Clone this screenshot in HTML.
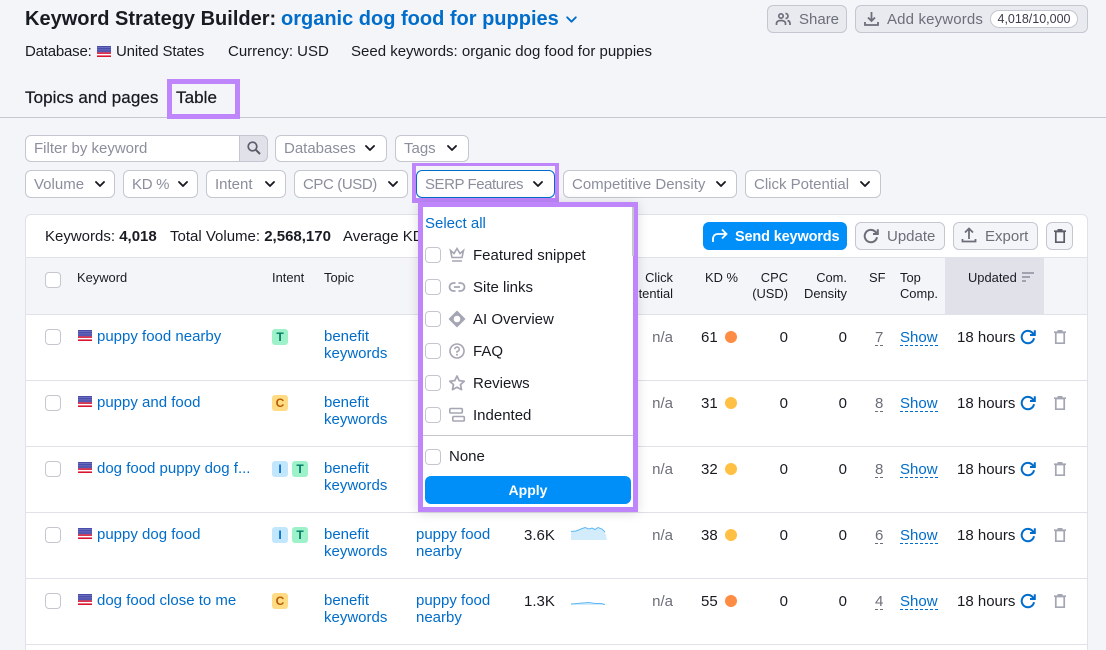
<!DOCTYPE html>
<html style="width:1106px;height:650px;overflow:hidden"><head><meta charset="utf-8">
<style>
html,body{margin:0;padding:0}
body{width:1106px;height:650px;overflow:hidden;background:#f4f5f9;position:relative;font-family:"Liberation Sans",sans-serif;font-size:15px;color:#191b23;letter-spacing:0}
.a,.t,.r{position:absolute}
.t,.r{white-space:nowrap;line-height:20px;margin-top:1px}
.r{text-align:right}
.b{color:#006dca}
.g{color:#8b8e9c}
.s{color:#6c6e79}
.h{font-size:12.9px}
.box{position:absolute;box-sizing:border-box;background:#fff;border:1px solid #c4c7cf;border-radius:6px}
.btn{position:absolute;box-sizing:border-box;background:#e9eaf0;border:1px solid #c4c7cf;border-radius:6px}
.cb{position:absolute;box-sizing:border-box;width:16px;height:16px;background:#fff;border:1px solid #c4c7cf;border-radius:4px}
.ln{position:absolute;height:1px;background:#e0e1e9}
.bd{position:absolute;width:16px;height:16px;border-radius:3px;text-align:center;font-weight:bold;font-size:12px;line-height:16px;letter-spacing:0}
.T{background:#9ef2c9;color:#007c65}
.C{background:#ffdb83;color:#b75d05}
.I{background:#c2e7fc;color:#006dca}
.d{position:absolute;width:12px;height:12px;border-radius:50%}
.dash{border-bottom:1px dashed currentColor;line-height:17px;height:16px}
.m{-webkit-text-stroke:.25px currentColor}
svg{position:absolute;overflow:visible}
</style></head><body>
<svg width="0" height="0" style="position:absolute">
<symbol id="flag" viewBox="0 0 14 11"><rect width="14" height="11" fill="#fff"/><rect y="0" width="14" height="1.570" fill="#d9142e"/><rect y="3.140" width="14" height="1.570" fill="#d9142e"/><rect y="6.280" width="14" height="1.570" fill="#d9142e"/><rect y="9.420" width="14" height="1.580" fill="#d9142e"/><rect width="14" height="6.200" fill="#3438a0"/><path d="M.5 1.200h13M.5 3.100h13M.5 5h13" stroke="#dfe2fa" stroke-width=".8" stroke-dasharray="1 1"/></symbol>
<symbol id="chev" viewBox="0 0 12 8"><path d="M2 2l4 4 4-4" fill="none" stroke="#191b23" stroke-width="1.900" stroke-linecap="round" stroke-linejoin="round"/></symbol>
<symbol id="ref" viewBox="0 0 16 16"><path d="M14 9.200A6.200 6.200 0 1 1 12.200 3.600L14.600 6M14.800 1.200V6H10" fill="none" stroke="currentColor" stroke-width="2"/></symbol>
<symbol id="tr" viewBox="0 0 12 14"><path d="M1.800 2.500h8.400v10.700H1.800zM0 2.200h12M3.500 .8h5" fill="none" stroke="currentColor" stroke-width="1.700"/></symbol>
</svg>

<!-- Header -->
<div class="t" style="left:25px;top:7px;font-size:20px;font-weight:bold;line-height:22px">Keyword Strategy Builder:</div>
<div class="t b" style="left:281px;top:7px;font-size:20px;font-weight:bold;line-height:22px">organic dog food for puppies</div>
<svg style="left:565px;top:15px" width="13" height="9" viewBox="0 0 12 8"><path d="M2 2l4 4 4-4" fill="none" stroke="#006dca" stroke-width="1.700" stroke-linecap="round" stroke-linejoin="round"/></svg>

<div class="t" style="left:25px;top:41px;letter-spacing:-.2px">Database:</div>
<svg style="left:97px;top:46px" width="14" height="11"><use href="#flag"/></svg>
<div class="t" style="left:116px;top:41px;letter-spacing:-.15px">United States</div>
<div class="t" style="left:228px;top:41px">Currency: USD</div>
<div class="t" style="left:351px;top:41px">Seed keywords: organic dog food for puppies</div>

<div class="btn" style="left:767px;top:5px;width:80px;height:28px"></div>
<svg style="left:775px;top:11px;color:#6c6e79" width="16" height="16" viewBox="0 0 16 16"><g fill="none" stroke="currentColor" stroke-width="1.700"><circle cx="6" cy="5" r="2.200"/><path d="M1.500 14v-1.500c0-2 2-3 4.500-3s4.500 1 4.500 3V14M10.500 2.500a2.400 2.400 0 0 1 0 5M12.500 9.500c1.500.4 2.500 1.400 2.500 3V14"/></g></svg>
<div class="t s" style="left:799px;top:9px">Share</div>
<div class="btn" style="left:855px;top:5px;width:233px;height:28px"></div>
<svg style="left:864px;top:11px" width="15" height="16" viewBox="0 0 15 16"><path d="M7.500 1v8.500M4 6.500l3.500 3.500 3.500-3.500M1 11v3h13v-3" fill="none" stroke="#6c6e79" stroke-width="1.800"/></svg>
<div class="t s" style="left:887px;top:9px;letter-spacing:.15px">Add keywords</div>
<div class="a" style="left:990px;top:10px;width:88px;height:18px;box-sizing:border-box;background:#fff;border:1px solid #c4c7cf;border-radius:9px;text-align:center;font-size:12.500px;line-height:16px;color:#3b3d47">4,018/10,000</div>

<!-- Tabs -->
<div class="t m" style="left:25px;top:87px;font-size:17px;letter-spacing:.07px">Topics and pages</div>
<div class="t m" style="left:176px;top:87px;font-size:17px;letter-spacing:.07px">Table</div>
<div class="ln" style="left:0;top:117px;width:1106px;background:#c4c7cf"></div>
<div class="a" style="left:167px;top:79px;width:73px;height:40px;box-sizing:border-box;border:5px solid #bf86fb"></div>

<!-- Filters -->
<div class="box" style="left:25px;top:135px;width:243px;height:27px"></div>
<div class="a" style="left:239px;top:135px;width:29px;height:27px;box-sizing:border-box;background:#e0e1e9;border:1px solid #c4c7cf;border-radius:0 6px 6px 0"></div>
<svg style="left:246px;top:140px" width="16" height="16" viewBox="0 0 16 16"><circle cx="6.500" cy="6.500" r="4.300" fill="none" stroke="#5a5d69" stroke-width="1.700"/><path d="M10 10l4 4" stroke="#5a5d69" stroke-width="2"/></svg>
<div class="t g" style="left:34px;top:138px">Filter by keyword</div>

<div class="box" style="left:275px;top:135px;width:112px;height:27px"></div>
<div class="t g" style="left:284px;top:138px">Databases</div>
<svg style="left:364px;top:144px" width="12" height="8"><use href="#chev"/></svg>
<div class="box" style="left:395px;top:135px;width:74px;height:27px"></div>
<div class="t g" style="left:404px;top:138px">Tags</div>
<svg style="left:446px;top:144px" width="12" height="8"><use href="#chev"/></svg>

<div class="box" style="left:25px;top:170px;width:90px;height:28px"></div>
<div class="t g" style="left:34px;top:174px">Volume</div>
<svg style="left:94px;top:180px" width="12" height="8"><use href="#chev"/></svg>
<div class="box" style="left:123px;top:170px;width:75px;height:28px"></div>
<div class="t g" style="left:132px;top:174px;letter-spacing:-.3px">KD %</div>
<svg style="left:177px;top:180px" width="12" height="8"><use href="#chev"/></svg>
<div class="box" style="left:206px;top:170px;width:80px;height:28px"></div>
<div class="t g" style="left:215px;top:174px">Intent</div>
<svg style="left:264px;top:180px" width="12" height="8"><use href="#chev"/></svg>
<div class="box" style="left:294px;top:170px;width:114px;height:28px"></div>
<div class="t g" style="left:303px;top:174px;letter-spacing:-.4px">CPC (USD)</div>
<svg style="left:387px;top:180px" width="12" height="8"><use href="#chev"/></svg>
<div class="box" style="left:416px;top:170px;width:139px;height:28px;border-color:#006dca"></div>
<div class="t g" style="left:425px;top:174px;letter-spacing:-.45px">SERP Features</div>
<svg style="left:532px;top:180px" width="12" height="8"><use href="#chev"/></svg>
<div class="a" style="left:412px;top:163px;width:147px;height:40px;box-sizing:border-box;border:5px solid #bf86fb;border-top-width:3px;border-left-width:4px;border-right-width:4px"></div>
<div class="box" style="left:563px;top:170px;width:174px;height:28px"></div>
<div class="t g" style="left:572px;top:174px">Competitive Density</div>
<svg style="left:715px;top:180px" width="12" height="8"><use href="#chev"/></svg>
<div class="box" style="left:745px;top:170px;width:136px;height:28px"></div>
<div class="t g" style="left:754px;top:174px">Click Potential</div>
<svg style="left:859px;top:180px" width="12" height="8"><use href="#chev"/></svg>

<!-- Card -->
<div class="a" style="left:25px;top:214px;width:1063px;height:436px;box-sizing:border-box;background:#fff;border:1px solid #e0e1e9;border-bottom:0;border-radius:6px 6px 0 0"></div>
<div class="t" style="left:45px;top:226px">Keywords: <b>4,018</b></div>
<div class="t" style="left:170px;top:226px">Total Volume: <b>2,568,170</b></div>
<div class="t" style="left:343px;top:226px">Average KD: <b>42%</b></div>

<div class="a" style="left:703px;top:222px;width:144px;height:28px;background:#008ff8;border-radius:6px"></div>
<svg style="left:711px;top:227px" width="17" height="17" viewBox="0 0 17 17"><path d="M2 15v-3c0-3 2-5 5-5h8M11 2.500L15.500 7 11 11.500" fill="none" stroke="#fff" stroke-width="1.800"/></svg>
<div class="t" style="left:735px;top:226px;color:#fff;font-weight:bold;font-size:14.500px;letter-spacing:-.15px">Send keywords</div>
<div class="btn" style="left:855px;top:222px;width:90px;height:28px;background:#f4f5f9"></div>
<svg style="left:863px;top:228px;color:#6c6e79" width="16" height="16"><use href="#ref"/></svg>
<div class="t s" style="left:887px;top:226px">Update</div>
<div class="btn" style="left:953px;top:222px;width:85px;height:28px;background:#f4f5f9"></div>
<svg style="left:961px;top:227px" width="16" height="16" viewBox="0 0 16 16"><path d="M8 12V2M4 5.500L8 1.500l4 4M1.500 12v2.500h13V12" fill="none" stroke="#6c6e79" stroke-width="1.800"/></svg>
<div class="t s" style="left:985px;top:226px">Export</div>
<div class="btn" style="left:1046px;top:222px;width:27px;height:28px;background:#f4f5f9"></div>
<svg style="left:1054px;top:229px;color:#5a5d69" width="12" height="14"><use href="#tr"/></svg>

<!-- Table head -->
<div class="a" style="left:26px;top:258px;width:1061px;height:56px;background:#f4f5f9"></div>
<div class="a" style="left:945px;top:258px;width:99px;height:56px;background:#e0e1e9"></div>
<div class="ln" style="left:26px;top:257px;width:1061px"></div>
<div class="ln" style="left:26px;top:314px;width:1061px"></div>
<div class="cb" style="left:45px;top:272px"></div>
<div class="t h" style="left:77px;top:267px">Keyword</div>
<div class="t h" style="left:272px;top:267px">Intent</div>
<div class="t h" style="left:324px;top:267px">Topic</div>
<div class="r h" style="right:433px;top:267px">Click</div>
<div class="r h" style="right:433px;top:283px">Potential</div>
<div class="t h" style="left:705px;top:267px">KD %</div>
<div class="r h" style="right:318px;top:267px">CPC</div>
<div class="r h" style="right:318px;top:283px">(USD)</div>
<div class="r h" style="right:259px;top:267px">Com.</div>
<div class="r h" style="right:259px;top:283px">Density</div>
<div class="t h" style="left:869px;top:267px">SF</div>
<div class="t h" style="left:900px;top:267px">Top</div>
<div class="t h" style="left:900px;top:283px">Comp.</div>
<div class="t h" style="left:968px;top:267px">Updated</div>
<svg style="left:1022px;top:272px" width="12" height="10" viewBox="0 0 12 10"><path d="M0 1h12M0 5h8M0 9h4" stroke="#8b8e9c" stroke-width="1.500"/></svg>

<!-- Row 1 -->
<div class="ln" style="left:26px;top:380px;width:1061px"></div>
<div class="cb" style="left:45px;top:329px"></div>
<svg style="left:78px;top:330px" width="14" height="11"><use href="#flag"/></svg>
<div class="t b" style="left:97px;top:326px">puppy food nearby</div>
<div class="bd T" style="left:272px;top:329px">T</div>
<div class="t b" style="left:324px;top:326px">benefit</div>
<div class="t b" style="left:324px;top:343px">keywords</div>
<div class="r s" style="right:433px;top:327px">n/a</div>
<div class="t" style="left:701px;top:327px">61</div><div class="d" style="left:725px;top:331px;background:#ff8c43"></div>
<div class="r" style="right:318px;top:327px">0</div>
<div class="r" style="right:259px;top:327px">0</div>
<div class="t s dash" style="left:875px;top:328px">7</div>
<div class="t b dash" style="left:900px;top:328px">Show</div>
<div class="t" style="left:957px;top:327px">18 hours</div>
<svg style="left:1020px;top:329px;color:#006dca" width="16" height="16"><use href="#ref"/></svg>
<svg style="left:1054px;top:330px;color:#a4a6b3" width="12" height="14"><use href="#tr"/></svg>

<!-- Row 2 -->
<div class="ln" style="left:26px;top:446px;width:1061px"></div>
<div class="cb" style="left:45px;top:395px"></div>
<svg style="left:78px;top:396px" width="14" height="11"><use href="#flag"/></svg>
<div class="t b" style="left:97px;top:392px">puppy and food</div>
<div class="bd C" style="left:272px;top:395px">C</div>
<div class="t b" style="left:324px;top:392px">benefit</div>
<div class="t b" style="left:324px;top:409px">keywords</div>
<div class="r s" style="right:433px;top:393px">n/a</div>
<div class="t" style="left:701px;top:393px">31</div><div class="d" style="left:725px;top:397px;background:#ffc043"></div>
<div class="r" style="right:318px;top:393px">0</div>
<div class="r" style="right:259px;top:393px">0</div>
<div class="t s dash" style="left:875px;top:394px">8</div>
<div class="t b dash" style="left:900px;top:394px">Show</div>
<div class="t" style="left:957px;top:393px">18 hours</div>
<svg style="left:1020px;top:395px;color:#006dca" width="16" height="16"><use href="#ref"/></svg>
<svg style="left:1054px;top:396px;color:#a4a6b3" width="12" height="14"><use href="#tr"/></svg>

<!-- Row 3 -->
<div class="ln" style="left:26px;top:512px;width:1061px"></div>
<div class="cb" style="left:45px;top:461px"></div>
<svg style="left:78px;top:462px" width="14" height="11"><use href="#flag"/></svg>
<div class="t b" style="left:97px;top:458px">dog food puppy dog f...</div>
<div class="bd I" style="left:272px;top:461px">I</div><div class="bd T" style="left:292px;top:461px">T</div>
<div class="t b" style="left:324px;top:458px">benefit</div>
<div class="t b" style="left:324px;top:475px">keywords</div>
<div class="r s" style="right:433px;top:459px">n/a</div>
<div class="t" style="left:701px;top:459px">32</div><div class="d" style="left:725px;top:463px;background:#ffc043"></div>
<div class="r" style="right:318px;top:459px">0</div>
<div class="r" style="right:259px;top:459px">0</div>
<div class="t s dash" style="left:875px;top:460px">8</div>
<div class="t b dash" style="left:900px;top:460px">Show</div>
<div class="t" style="left:957px;top:459px">18 hours</div>
<svg style="left:1020px;top:461px;color:#006dca" width="16" height="16"><use href="#ref"/></svg>
<svg style="left:1054px;top:462px;color:#a4a6b3" width="12" height="14"><use href="#tr"/></svg>

<!-- Row 4 -->
<div class="ln" style="left:26px;top:578px;width:1061px"></div>
<div class="cb" style="left:45px;top:527px"></div>
<svg style="left:78px;top:528px" width="14" height="11"><use href="#flag"/></svg>
<div class="t b" style="left:97px;top:524px">puppy dog food</div>
<div class="bd I" style="left:272px;top:527px">I</div><div class="bd T" style="left:292px;top:527px">T</div>
<div class="t b" style="left:324px;top:524px">benefit</div>
<div class="t b" style="left:324px;top:541px">keywords</div>
<div class="t b" style="left:416px;top:524px">puppy food</div>
<div class="t b" style="left:416px;top:541px">nearby</div>
<div class="t" style="left:524px;top:525px">3.6K</div>
<svg style="left:571px;top:526px" width="36" height="15" viewBox="0 0 36 15"><path d="M0 5.500L5 5 10 3 14 1.500 18 3 21 2 24 3.500 27 1.500 31 3 34 6 36 14H0z" fill="#d2ecfc"/><path d="M0 5.500L5 5 10 3 14 1.500 18 3 21 2 24 3.500 27 1.500 31 3 34 6" fill="none" stroke="#5fb8f5" stroke-width="1"/></svg>
<div class="r s" style="right:433px;top:525px">n/a</div>
<div class="t" style="left:701px;top:525px">38</div><div class="d" style="left:725px;top:529px;background:#ffc043"></div>
<div class="r" style="right:318px;top:525px">0</div>
<div class="r" style="right:259px;top:525px">0</div>
<div class="t s dash" style="left:875px;top:526px">6</div>
<div class="t b dash" style="left:900px;top:526px">Show</div>
<div class="t" style="left:957px;top:525px">18 hours</div>
<svg style="left:1020px;top:527px;color:#006dca" width="16" height="16"><use href="#ref"/></svg>
<svg style="left:1054px;top:528px;color:#a4a6b3" width="12" height="14"><use href="#tr"/></svg>

<!-- Row 5 -->
<div class="ln" style="left:26px;top:644px;width:1061px"></div>
<div class="cb" style="left:45px;top:593px"></div>
<svg style="left:78px;top:594px" width="14" height="11"><use href="#flag"/></svg>
<div class="t b" style="left:97px;top:590px">dog food close to me</div>
<div class="bd C" style="left:272px;top:593px">C</div>
<div class="t b" style="left:324px;top:590px">benefit</div>
<div class="t b" style="left:324px;top:607px">keywords</div>
<div class="t b" style="left:416px;top:590px">puppy food</div>
<div class="t b" style="left:416px;top:607px">nearby</div>
<div class="t" style="left:524px;top:591px">1.3K</div>
<svg style="left:571px;top:600px" width="36" height="8" viewBox="0 0 36 8"><path d="M0 4L6 3.500 12 3 18 2.500 24 3.500 30 3.500 34 4.500V5H0z" fill="#d2ecfc"/><path d="M0 4L6 3.500 12 3 18 2.500 24 3.500 30 3.500 34 4.500" fill="none" stroke="#5fb8f5" stroke-width="1"/></svg>
<div class="r s" style="right:433px;top:591px">n/a</div>
<div class="t" style="left:701px;top:591px">55</div><div class="d" style="left:725px;top:595px;background:#ff8c43"></div>
<div class="r" style="right:318px;top:591px">0</div>
<div class="r" style="right:259px;top:591px">0</div>
<div class="t s dash" style="left:875px;top:592px">4</div>
<div class="t b dash" style="left:900px;top:592px">Show</div>
<div class="t" style="left:957px;top:591px">18 hours</div>
<svg style="left:1020px;top:593px;color:#006dca" width="16" height="16"><use href="#ref"/></svg>
<svg style="left:1054px;top:594px;color:#a4a6b3" width="12" height="14"><use href="#tr"/></svg>

<!-- Dropdown -->
<div class="a" style="left:418px;top:202px;width:220px;height:310px;box-sizing:border-box;background:#fff;border:5px solid #bf86fb;box-shadow:0 1px 10px rgba(25,27,35,.15)"></div>
<div class="a" style="left:632px;top:207px;width:2px;height:49px;background:#c4c7cf"></div>
<div class="t b" style="left:425px;top:213px">Select all</div>

<div class="cb" style="left:425px;top:247px"></div>
<svg style="left:449px;top:247px" width="16" height="16" viewBox="0 0 16 16"><path d="M1.500 3.500L5 6.500 8 1.500l3 5 3.500-3-1.500 7H3zM3 14h10" fill="none" stroke="#a4a6b3" stroke-width="1.600"/></svg>
<div class="t" style="left:473px;top:245px">Featured snippet</div>

<div class="cb" style="left:425px;top:279px"></div>
<svg style="left:449px;top:279px" width="16" height="16" viewBox="0 0 16 16"><path d="M6.500 4H4.500a4 4 0 0 0 0 8h2M9.500 4h2a4 4 0 0 1 0 8h-2M5 8h6" fill="none" stroke="#a4a6b3" stroke-width="1.800"/></svg>
<div class="t" style="left:473px;top:277px">Site links</div>

<div class="cb" style="left:425px;top:311px"></div>
<svg style="left:449px;top:311px" width="16" height="16" viewBox="0 0 16 16"><path d="M8 .5L15.500 8 8 15.500 .5 8z" fill="#a4a6b3" stroke="#a4a6b3" stroke-width="1.500" stroke-linejoin="round"/><circle cx="8" cy="8" r="3.300" fill="#fff"/></svg>
<div class="t" style="left:473px;top:309px">AI Overview</div>

<div class="cb" style="left:425px;top:343px"></div>
<svg style="left:449px;top:343px" width="16" height="16" viewBox="0 0 16 16"><circle cx="8" cy="8" r="7" fill="none" stroke="#a4a6b3" stroke-width="1.600"/><path d="M5.800 6.200A2.200 2.200 0 1 1 8 8.500v1.200" fill="none" stroke="#a4a6b3" stroke-width="1.600"/><circle cx="8" cy="11.700" r="1" fill="#a4a6b3"/></svg>
<div class="t" style="left:473px;top:341px">FAQ</div>

<div class="cb" style="left:425px;top:375px"></div>
<svg style="left:449px;top:375px" width="16" height="16" viewBox="0 0 16 16"><path d="M8 1l2.200 4.600 5 .6-3.700 3.400 1 5L8 12.200 3.500 14.600l1-5L.8 6.200l5-.6z" fill="none" stroke="#a4a6b3" stroke-width="1.700" stroke-linejoin="round"/></svg>
<div class="t" style="left:473px;top:373px">Reviews</div>

<div class="cb" style="left:425px;top:407px"></div>
<svg style="left:449px;top:407px" width="16" height="16" viewBox="0 0 16 16"><rect x=".8" y="1.500" width="12.500" height="4.500" rx="1" fill="none" stroke="#a4a6b3" stroke-width="1.600"/><rect x="3.800" y="9.500" width="11.500" height="4.500" rx="1" fill="none" stroke="#a4a6b3" stroke-width="1.600"/></svg>
<div class="t" style="left:473px;top:405px">Indented</div>

<div class="a" style="left:423px;top:435px;width:210px;height:1px;background:#c4c7cf"></div>
<div class="cb" style="left:425px;top:449px"></div>
<div class="t" style="left:449px;top:446px">None</div>
<div class="a" style="left:425px;top:476px;width:206px;height:28px;background:#008ff8;border-radius:6px;color:#fff;font-weight:bold;font-size:14px;text-align:center;line-height:29px">Apply</div>
</body></html>
